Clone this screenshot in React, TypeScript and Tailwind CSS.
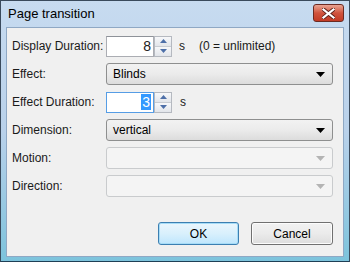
import React from "react";

function Spinner() {
  return (
    <div className="flex h-full w-[18px] flex-col border border-[#b5b9c0] bg-[#eef0f3]">
      <div className="flex flex-1 items-center justify-center border-b border-[#c8ccd2] bg-gradient-to-b from-[#f7f8fa] to-[#e2e5ea]">
        <svg width="7" height="4" viewBox="0 0 7 4">
          <path d="M0 4 L3.5 0 L7 4 Z" fill="#4d6fa8" />
        </svg>
      </div>
      <div className="flex flex-1 items-center justify-center bg-gradient-to-b from-[#f7f8fa] to-[#e2e5ea]">
        <svg width="7" height="4" viewBox="0 0 7 4">
          <path d="M0 0 L3.5 4 L7 0 Z" fill="#4d6fa8" />
        </svg>
      </div>
    </div>
  );
}

function Select({ value, disabled }: { value?: string; disabled?: boolean }) {
  return (
    <div
      className={
        disabled
          ? "flex h-[22px] w-[228px] items-center justify-between rounded-[3px] border border-[#c9cbcd] bg-[#f4f4f4] px-[6px]"
          : "flex h-[22px] w-[228px] items-center justify-between rounded-[3px] border border-[#8e8f8f] bg-gradient-to-b from-[#f2f2f2] via-[#ebebeb] to-[#dcdcdc] px-[6px]"
      }
    >
      <span className="text-black">{value}</span>
      <svg width="9" height="5" viewBox="0 0 9 5" className="mr-[1px]">
        <path d="M0 0 L9 0 L4.5 5 Z" fill={disabled ? "#b4b4b4" : "#000"} />
      </svg>
    </div>
  );
}

function Label({ children }: { children: React.ReactNode }) {
  return <div className="w-[94px] shrink-0">{children}</div>;
}

export default function App() {
  return (
    <div
      className="flex h-[262px] w-[350px] flex-col overflow-hidden border border-[#3a4a5c] border-b-[#1f3f55] bg-gradient-to-b from-[#c7dbf0] via-[#b9d1ea] to-[#7cc3dc] text-[12px] text-[#1a1a1a]"
      style={{ fontFamily: '"Liberation Sans", Arial, sans-serif' }}
    >
      {/* title bar */}
      <div className="flex h-[26px] shrink-0 items-center justify-between pl-[7px] pr-[5px]">
        <span className="text-[13px] text-black">Page transition</span>
        <div className="mt-[-2px] flex h-[18px] w-[31px] items-center justify-center rounded-[3px] border border-[#6b2a22] bg-gradient-to-b from-[#e8a493] via-[#d0533d] to-[#c23b25]">
          <svg width="13" height="11" viewBox="0 0 13 11">
            <path
              d="M1.5 1.5 L11.5 9.5 M11.5 1.5 L1.5 9.5"
              stroke="#5a2018"
              strokeWidth="4"
              strokeLinecap="square"
            />
            <path
              d="M1.5 1.5 L11.5 9.5 M11.5 1.5 L1.5 9.5"
              stroke="#fff"
              strokeWidth="2.2"
              strokeLinecap="square"
            />
          </svg>
        </div>
      </div>

      {/* body */}
      <div className="mx-[5px] mb-[4px] flex flex-1 flex-col border border-[#8fa8c4] bg-[#f0f0f0] pb-[11px] pl-[5px] pr-[10px] pt-[7px]">
        <div className="flex flex-col gap-[6px]">
          <div className="flex h-[22px] items-center">
            <Label>Display Duration:</Label>
            <div className="flex h-[21px] items-stretch">
              <div className="flex w-[48px] items-center justify-end border border-[#abadb3] border-t-[#8e9299] bg-white pr-[2px] text-[14px] font-normal leading-none text-[#222]">
                8
              </div>
              <Spinner />
            </div>
            <span className="ml-[7px]">s</span>
            <span className="ml-[14px]">(0 = unlimited)</span>
          </div>

          <div className="flex h-[22px] items-center">
            <Label>Effect:</Label>
            <Select value="Blinds" />
          </div>

          <div className="flex h-[22px] items-center">
            <Label>Effect Duration:</Label>
            <div className="flex h-[21px] items-stretch">
              <div className="flex w-[48px] items-center justify-end border border-[#569de5] bg-white pr-[2px]">
                <span className="bg-[#3399ff] px-[1px] text-[14px] leading-[16px] text-white">3</span>
              </div>
              <Spinner />
            </div>
            <span className="ml-[8px]">s</span>
          </div>

          <div className="flex h-[22px] items-center">
            <Label>Dimension:</Label>
            <Select value="vertical" />
          </div>

          <div className="flex h-[22px] items-center">
            <Label>Motion:</Label>
            <Select disabled />
          </div>

          <div className="flex h-[22px] items-center">
            <Label>Direction:</Label>
            <Select disabled />
          </div>
        </div>

        <div className="mt-auto flex justify-end gap-[12px]">
          <button className="h-[23px] w-[81px] rounded-[3px] border border-[#3c7fb1] bg-gradient-to-b from-[#eaf6fd] via-[#d9f0fc] to-[#bee6fd] text-black shadow-[inset_0_0_0_1px_#a6dcf7]">
            OK
          </button>
          <button className="h-[23px] w-[82px] rounded-[3px] border border-[#707070] bg-gradient-to-b from-[#f2f2f2] via-[#ebebeb] to-[#dddddd] text-black shadow-[inset_0_0_0_1px_#fcfcfc]">
            Cancel
          </button>
        </div>
      </div>
    </div>
  );
}
